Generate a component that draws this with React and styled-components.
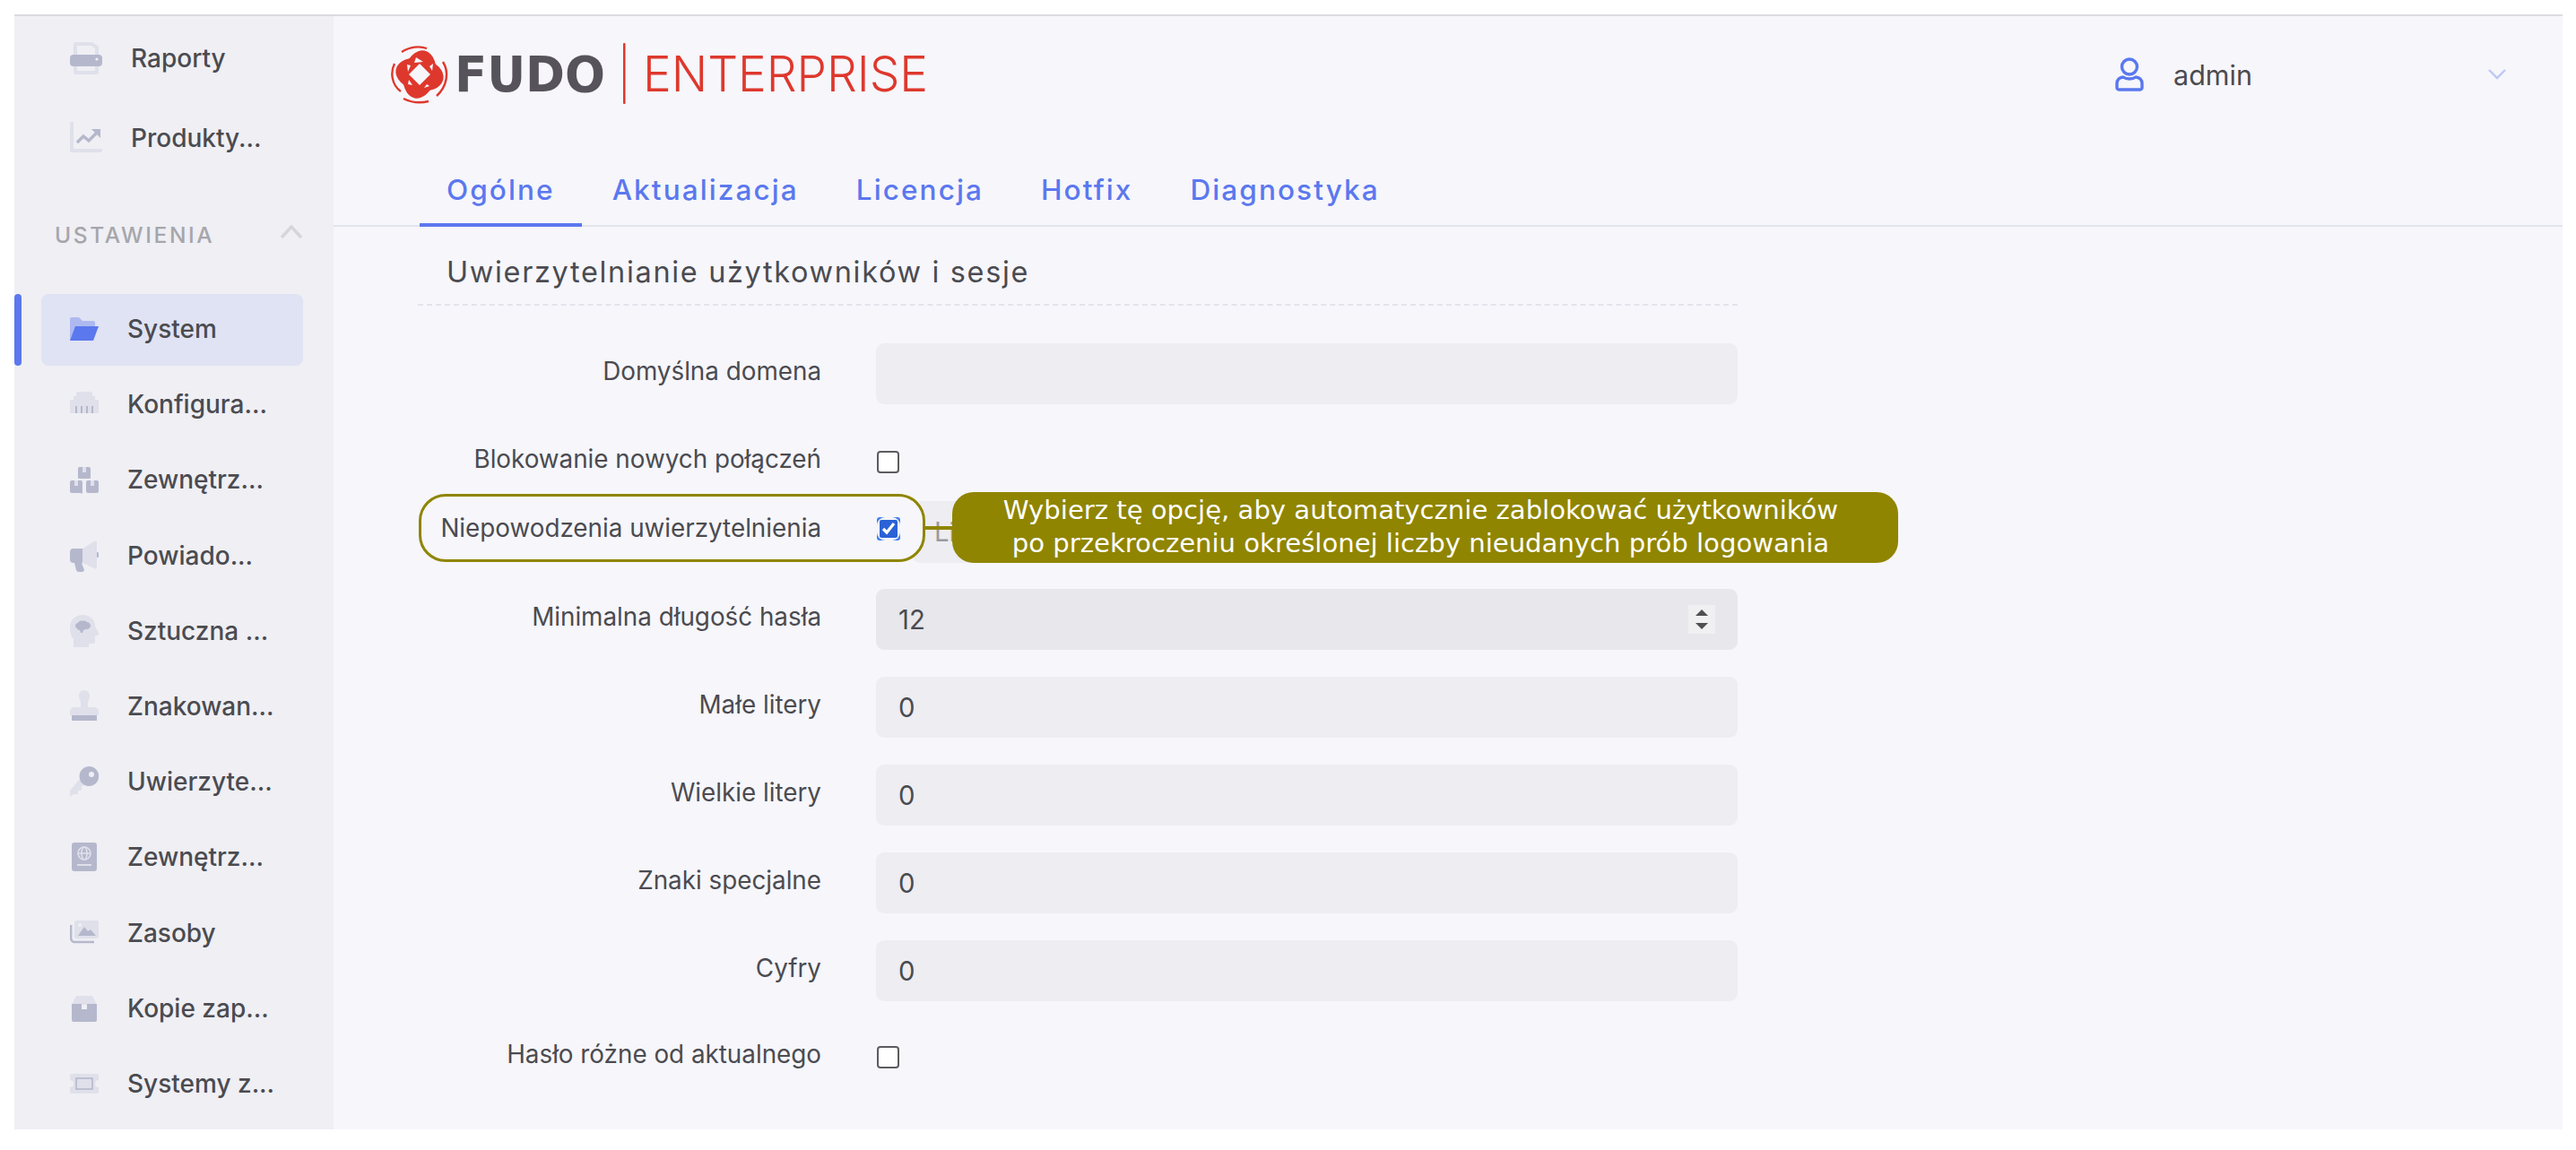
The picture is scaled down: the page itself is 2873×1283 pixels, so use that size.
import styled, { createGlobalStyle } from 'styled-components';

const Global = createGlobalStyle`
  html, body { margin:0; padding:0; background:#fff; }
  body { font-family:Inter, "Liberation Sans", sans-serif; color:#4b4b50; }
`;

const DARK = '#B5B8CC';
const LIGHT = '#DFE0EA';

const Page = styled.div`
  box-sizing:border-box;
  width:2873px; height:1283px;
  padding:16px 15px 23px 16px;
`;
const Shell = styled.div`
  display:flex;
  height:100%;
  border-top:2px solid #dcdce0;
  box-sizing:border-box;
  overflow:hidden;
`;
const Side = styled.aside`
  width:356px;
  flex:none;
  padding-top:6px;
  box-sizing:border-box;
  background:#EFEFF4;
`;
const Menu = styled.ul`
  list-style:none;
  margin:0; padding:0;
  display:flex; flex-direction:column;
  gap:${p => p.$gap}px;
`;
const Item = styled.li`
  position:relative;
  display:flex; align-items:center;
  width:292px;
  height:${p => (p.$top ? 84 : 80)}px;
  margin-left:30px;
  padding:0 0 2px 32px;
  box-sizing:border-box;
  gap:32px;
  font-size:28px;
  font-weight:500;
  white-space:nowrap;
  border-radius:8px;
  background:${p => (p.$active ? '#E0E3F3' : 'transparent')};

  &::before{
    content:${p => (p.$active ? '""' : 'none')};
    position:absolute; left:-30px; top:0;
    width:8px; height:80px;
    border-radius:4px;
    background:#5B78EE;
  }
`;
const IconBox = styled.svg`
  flex:none;
  width:${p => p.$w}px;
  height:36px;
`;
const SectionHead = styled.div`
  display:flex; align-items:center; justify-content:space-between;
  height:42px;
  margin:44px 34px 45px 45px;
  font-size:24.5px;
  font-weight:500;
  letter-spacing:2.6px;
  color:#a6a6ab;

  svg { margin-bottom:8px; }
`;
const Main = styled.main`
  flex:1;
  background:#F6F6FB;
`;
const TopBar = styled.header`
  display:flex; align-items:center; justify-content:space-between;
  height:130px;
  padding:0 63px 0 64px;
`;
const UserMenu = styled.div`
  display:flex; align-items:center;
  font-size:30.5px;
  color:#4b4b50;
`;
const UserName = styled.span`
  margin-left:33px;
  width:351px;
`;
const Tabs = styled.nav`
  display:flex;
  height:105px;
  padding-left:96px;
  gap:4px;
  border-bottom:2px solid #E2E4EC;
  box-sizing:border-box;
`;
const Tab = styled.a`
  display:flex; align-items:center;
  height:105px;
  padding:26px 30px 0;
  box-sizing:border-box;
  font-size:31.500px;
  font-weight:500;
  letter-spacing:2.100px;
  color:#5B78EE;
  border-bottom:4px solid ${p => (p.$on ? '#5B78EE' : 'transparent')};
`;
const Content = styled.section`
  width:1472px;
  margin-left:94px;
`;
const Title = styled.h2`
  margin:0;
  padding:30px 0 14px 32px;
  font-size:32.4px;
  line-height:42px;
  font-weight:400;
  letter-spacing:1.7px;
  color:#4b4b50;
  border-bottom:2px dashed #E2E4EA;
`;
const Form = styled.form`
  margin-top:42px;
`;
const Row = styled.div`
  position:relative;
  display:grid;
  grid-template-columns:450px 1fr;
  column-gap:61px;
  align-items:center;
  height:${p => p.$h || 68}px;
  margin-bottom:${p => p.$mb ?? 30}px;
`;
const Label = styled.label`
  position:relative;
  z-index:2;
  padding-bottom:${p => (p.$flat ? 3 : 7)}px;
  text-align:right;
  font-size:27.8px;
  color:#4b4b50;
  white-space:nowrap;
`;
const Field = styled.div`
  display:flex; align-items:center; justify-content:space-between;
  height:68px;
  padding:0 26px 0 25px;
  box-sizing:border-box;
  border-radius:9px;
  background:${p => (p.$active ? '#E7E7EC' : '#EDEDF2')};
  font-size:29.3px;
  color:#4b4b50;
`;
const Spinner = styled.span`
  display:flex; flex-direction:column; align-items:center; justify-content:center;
  gap:8px;
  width:30px; height:32px;
  margin-right:-1px;
  background:#F0F0F2;
`;
const Arrow = styled.i`
  width:0; height:0;
  border-left:7px solid transparent;
  border-right:7px solid transparent;
  border-${p => (p.$down ? 'top' : 'bottom')}:7px solid #4f4f4f;
`;
const Check = styled.input.attrs({ type: 'checkbox' })`
  appearance:none;
  display:block;
  width:25px; height:25px;
  margin:0 0 0 1px;
  box-sizing:border-box;
  border:2px solid #5c5c60;
  border-radius:4px;
  background:#fff;
`;
const Controls = styled.div`
  position:relative;
  display:flex; align-items:flex-end;
  gap:13px;
  height:100%;
`;
const FocusRing = styled.span`
  position:relative;
  z-index:2;
  display:flex; align-items:center; justify-content:center;
  flex:none;
  width:26px; height:26px;
  margin-bottom:25px;
  margin-left:1px;
  border-radius:3px;
  background:#3F80F0;
`;
const FocusInner = styled.span`
  display:flex; align-items:center; justify-content:center;
  width:26px; height:26px;
  border-radius:9px;
  background:#F6F6FB;
`;
const FocusCheck = styled(Check)`
  appearance:auto;
  width:20px; height:20px;
  margin:0;
  accent-color:#2B62D6;
`;
const Hint = styled(Field)`
  flex:1;
  height:69px;
  color:#9a9aa0;
  overflow:hidden;
`;
const Halo = styled.div`
  position:absolute;
  left:1px; top:-1px;
  z-index:1;
  width:565px; height:76px;
  box-sizing:border-box;
  border:3px solid #8F8500;
  border-radius:30px;
  background:#F6F6FB;
`;
const Connector = styled.div`
  position:absolute;
  left:566px; top:35px;
  z-index:1;
  width:32px; height:4px;
  background:#8F8500;
`;
const Tooltip = styled.div`
  position:absolute;
  left:596px; top:-3px;
  z-index:3;
  display:flex; align-items:center; justify-content:center;
  width:1055px; height:79px;
  padding:0 10px 2px 0;
  box-sizing:border-box;
  border-radius:24px;
  background:#8F8500;
  color:#fff;
  font-family:"DejaVu Sans", sans-serif;
  font-size:29.100px;
  line-height:37px;
  text-align:center;
  white-space:nowrap;
`;

const Printer = () => (
  <IconBox $w={36} viewBox="0 0 36 36">
    <path fill={LIGHT} fillRule="evenodd" d="M7 0h18l7 5v10h-4V7l-4-3H8v11H4V3a3 3 0 0 1 3-3zM4 25h4v7h20v-7h4v8a3 3 0 0 1-3 3H7a3 3 0 0 1-3-3z" />
    <rect fill={DARK} y="14" width="36" height="13" rx="4" />
    <circle fill="#EFEFF4" cx="30" cy="19" r="1.6" />
  </IconBox>
);
const Chart = () => (
  <IconBox $w={36} viewBox="0 0 36 36">
    <path fill={LIGHT} d="M0 1a1 1 0 0 1 1-1h3v30h32v2a2 2 0 0 1-2 2H2a2 2 0 0 1-2-2z" />
    <path fill="none" stroke={DARK} strokeWidth="3.4" d="M8 23l7-7 6 5 9-9" />
    <path fill={DARK} d="M24 8h10v10z" />
  </IconBox>
);
const Folder = () => (
  <IconBox $w={32} viewBox="0 0 32 36">
    <path fill="#AEB9F0" d="M0 7a2 2 0 0 1 2-2h8l4 4h12a2 2 0 0 1 2 2v4H8L0 31z" />
    <path fill="#5B78EE" d="M6 15h26l-6 16H0z" />
  </IconBox>
);
const Ethernet = () => (
  <IconBox $w={32} viewBox="0 0 32 36">
    <path fill={LIGHT} d="M7 6a2 2 0 0 1 2-2h14a2 2 0 0 1 2 2v3h3v4h4v15H0V13h4V9h3z" />
    <path fill={DARK} d="M6 20h2v8H6zM12 20h2v8h-2zM18 20h2v8h-2zM24 20h2v8h-2z" />
  </IconBox>
);
const Boxes = () => (
  <IconBox $w={32} viewBox="0 0 32 36">
    <path fill={DARK} d="M9 6a2 2 0 0 1 2-2h3v6h4V4h3a2 2 0 0 1 2 2v10a1 1 0 0 1-1 1H10a1 1 0 0 1-1-1zM0 21a2 2 0 0 1 2-2h3v6h4v-6h3a2 2 0 0 1 2 2v11a1 1 0 0 1-2 1H2a2 2 0 0 1-2-2zM18 21a2 2 0 0 1 2-2h3v6h4v-6h3a2 2 0 0 1 2 2v10a2 2 0 0 1-2 2H20a2 2 0 0 1-2-2z" />
    <path fill={LIGHT} d="M14 4h4v6h-4zM5 19h4v6H5zM23 19h4v6h-4z" />
  </IconBox>
);
const Bullhorn = () => (
  <IconBox $w={32} viewBox="0 0 32 36">
    <path fill={LIGHT} d="M14 10L27 2a2 2 0 0 1 3 1v28a2 2 0 0 1-3 1L14 26z" />
    <path fill={DARK} d="M4 10h10v16h-1l3 8a2.600 2.600 0 0 1-2 2h-4a3 3 0 0 1-3-2l-2-8H4a4 4 0 0 1-4-4v-8a4 4 0 0 1 4-4z" />
    <path fill={DARK} d="M30 14a3 3 0 0 1 0 6z" />
  </IconBox>
);
const HeadBrain = () => (
  <IconBox $w={32} viewBox="0 0 32 36">
    <path fill={LIGHT} d="M14 0c8 0 14 5 14 12 0 2 4 7 4 9 0 1-1 2-3 2h-1v6a3 3 0 0 1-3 3h-4v4H4v-9C1 24 0 19 0 14 0 6 6 0 14 0z" />
    <path fill={DARK} d="M6 12c0-2 2-3 3-3 1-2 3-3 5-2 2-1 4 0 5 1 2 0 4 2 4 4s-2 4-4 4h-2c-1 1-1 1-2 1l-1 3h-2l-1-3c-2 0-3-1-3-2-1 0-2-1-2-3z" />
  </IconBox>
);
const Stamp = () => (
  <IconBox $w={32} viewBox="0 0 32 36">
    <path fill={LIGHT} d="M16 0a6 6 0 0 1 6 6c0 4-2 5-2 9v4h7a5 5 0 0 1 5 5v4H0v-4a5 5 0 0 1 5-5h7v-4c0-4-2-5-2-9a6 6 0 0 1 6-6z" />
    <path fill={DARK} d="M2 28h28v6H2z" />
  </IconBox>
);
const KeyIcon = () => (
  <IconBox $w={32} viewBox="0 0 32 36">
    <path fill={LIGHT} d="M11 15l7 7-5 1v5H9v4H4l-4 3v-7z" />
    <path fill={DARK} fillRule="evenodd" d="M21 1a11 11 0 1 1-9 17l-1-3A11 11 0 0 1 21 1zm3 6a3 3 0 1 0 0 6 3 3 0 0 0 0-6z" />
  </IconBox>
);
const Passport = () => (
  <IconBox $w={32} viewBox="0 0 32 36">
    <rect fill={DARK} x="2" y="2" width="28" height="32" rx="3" />
    <g fill="none" stroke={LIGHT} strokeWidth="1.6">
      <circle cx="16" cy="14" r="7" />
      <ellipse cx="16" cy="14" rx="3" ry="7" />
      <path d="M9 14h14" />
    </g>
    <rect fill={LIGHT} x="8" y="26" width="16" height="2" />
  </IconBox>
);
const Images = () => (
  <IconBox $w={32} viewBox="0 0 32 36">
    <rect fill={LIGHT} x="5" y="4" width="27" height="20" rx="2" />
    <path fill={DARK} d="M9 21l7-10 4 5 3-2 6 7z" />
    <circle fill="#EFEFF4" cx="11" cy="9" r="2" />
    <path fill="none" stroke={DARK} strokeWidth="2.4" d="M1.200 9v15a4 4 0 0 0 4 4H27" />
  </IconBox>
);
const BoxIcon = () => (
  <IconBox $w={32} viewBox="0 0 32 36">
    <path fill={LIGHT} d="M7 4h18l5 10H2z" />
    <path fill={DARK} d="M2 13h11v6h6v-6h11v18a2 2 0 0 1-2 2H4a2 2 0 0 1-2-2z" />
  </IconBox>
);
const Ticket = () => (
  <IconBox $w={32} viewBox="0 0 32 36">
    <path fill={LIGHT} d="M2 7h28a2 2 0 0 1 2 2v5a4 4 0 0 0 0 8v5a2 2 0 0 1-2 2H2a2 2 0 0 1-2-2v-5a4 4 0 0 0 0-8V9a2 2 0 0 1 2-2z" />
    <rect fill="none" stroke={DARK} strokeWidth="1.6" x="7" y="12" width="18" height="12" />
  </IconBox>
);

const Logo = () => (
  <svg width="660" height="70" viewBox="0 0 660 70">
    <g transform="translate(0 3)">
      <g fill="#DE382D" transform="rotate(12 32 32)">
        <ellipse cx="32" cy="32" rx="27" ry="18" />
        <ellipse cx="32" cy="32" rx="18" ry="27" />
      </g>
      <path fill="#F6F6FB" d="M18 21l4 1-3 7zM28 13l8 5-10 1zM47 20l-1 8-3-5zM43 45l-6 2 3-4zM20 38l4 6-5-1z" />
      <rect fill="#F6F6FB" x="23.500" y="23.500" width="17" height="17" transform="rotate(45 32 32)" />
      <g fill="none" stroke="#DE382D" strokeWidth="2.400">
        <path d="M12 7c9-6 20-7 28-4" />
        <path d="M4 20c-5 10-3 24 7 31" />
        <path d="M58 18c7 11 5 27-7 38" />
        <path d="M14 59c10 5 20 5 28 3" />
      </g>
    </g>
    <text x="71" y="54" textLength="168" lengthAdjust="spacingAndGlyphs" fontFamily="DejaVu Sans" fontWeight="700" fontSize="55" fill="#57535A">FUDO</text>
    <rect x="259" y="0" width="2.500" height="68" rx="1" fill="#DE382D" />
    <text x="281" y="54" textLength="318" lengthAdjust="spacingAndGlyphs" fontFamily="Inter" fontWeight="300" fontSize="55" fill="#DE382D">ENTERPRISE</text>
  </svg>
);

const topItems = [
  { icon: Printer, text: 'Raporty' },
  { icon: Chart, text: 'Produkty...' },
];
const items = [
  { icon: Folder, text: 'System', active: true },
  { icon: Ethernet, text: 'Konfigura...' },
  { icon: Boxes, text: 'Zewnętrz...' },
  { icon: Bullhorn, text: 'Powiado...' },
  { icon: HeadBrain, text: 'Sztuczna ...' },
  { icon: Stamp, text: 'Znakowan...' },
  { icon: KeyIcon, text: 'Uwierzyte...' },
  { icon: Passport, text: 'Zewnętrz...' },
  { icon: Images, text: 'Zasoby' },
  { icon: BoxIcon, text: 'Kopie zap...' },
  { icon: Ticket, text: 'Systemy z...' },
];
const tabs = ['Ogólne', 'Aktualizacja', 'Licencja', 'Hotfix', 'Diagnostyka'];

function App() {
  return (
    <Page>
      <Global />
      <Shell>
        <Side>
          <Menu $gap={5}>
            {topItems.map(({ icon: Icon, text }) => (
              <Item $top key={text}><Icon />{text}</Item>
            ))}
          </Menu>
          <SectionHead>
            USTAWIENIA
            <svg width="26" height="17" viewBox="0 0 26 17">
              <path d="M2 15L13 3l11 12" fill="none" stroke="#d6d6da" strokeWidth="3.500" />
            </svg>
          </SectionHead>
          <Menu $gap={4.2}>
            {items.map(({ icon: Icon, text, active }, i) => (
              <Item $active={active} key={i}><Icon />{text}</Item>
            ))}
          </Menu>
        </Side>
        <Main>
          <TopBar>
            <Logo />
            <UserMenu>
              <svg width="32" height="38" viewBox="0 0 32 38">
                <circle cx="16" cy="10.500" r="8.500" fill="none" stroke="#5B78EE" strokeWidth="3.400" />
                <path d="M9 22c2 1.500 4 2 7 2s5-.5 7-2c4 0 7 3 7 7v5c0 1-1 2-2 2H4c-1 0-2-1-2-2v-5c0-4 3-7 7-7z" fill="none" stroke="#5B78EE" strokeWidth="3.400" strokeLinejoin="round" />
              </svg>
              <UserName>admin</UserName>
              <svg width="20" height="12" viewBox="0 0 20 12">
                <path d="M1 1l9 9 9-9" fill="none" stroke="#BCC7F5" strokeWidth="2.400" />
              </svg>
            </UserMenu>
          </TopBar>
          <Tabs>
            {tabs.map((t, i) => <Tab $on={i === 0} key={t}>{t}</Tab>)}
          </Tabs>
          <Content>
            <Title>Uwierzytelnianie użytkowników i sesje</Title>
            <Form>
              <Row>
                <Label>Domyślna domena</Label>
                <Field />
              </Row>
              <Row $mb={3}>
                <Label>Blokowanie nowych połączeń</Label>
                <Check />
              </Row>
              <Row $h={76} $mb={29}>
                <Halo />
                <Label $flat>Niepowodzenia uwierzytelnienia</Label>
                <Controls>
                  <FocusRing>
                    <FocusInner><FocusCheck defaultChecked /></FocusInner>
                  </FocusRing>
                  <Hint>Liczba</Hint>
                </Controls>
                <Connector />
                <Tooltip>
                  Wybierz tę opcję, aby automatycznie zablokować użytkowników<br />
                  po przekroczeniu określonej liczby nieudanych prób logowania
                </Tooltip>
              </Row>
              <Row>
                <Label>Minimalna długość hasła</Label>
                <Field $active>12<Spinner><Arrow /><Arrow $down /></Spinner></Field>
              </Row>
              <Row>
                <Label>Małe litery</Label>
                <Field>0</Field>
              </Row>
              <Row>
                <Label>Wielkie litery</Label>
                <Field>0</Field>
              </Row>
              <Row>
                <Label>Znaki specjalne</Label>
                <Field>0</Field>
              </Row>
              <Row $mb={28}>
                <Label>Cyfry</Label>
                <Field>0</Field>
              </Row>
              <Row>
                <Label>Hasło różne od aktualnego</Label>
                <Check />
              </Row>
            </Form>
          </Content>
        </Main>
      </Shell>
    </Page>
  );
}

export default App;
